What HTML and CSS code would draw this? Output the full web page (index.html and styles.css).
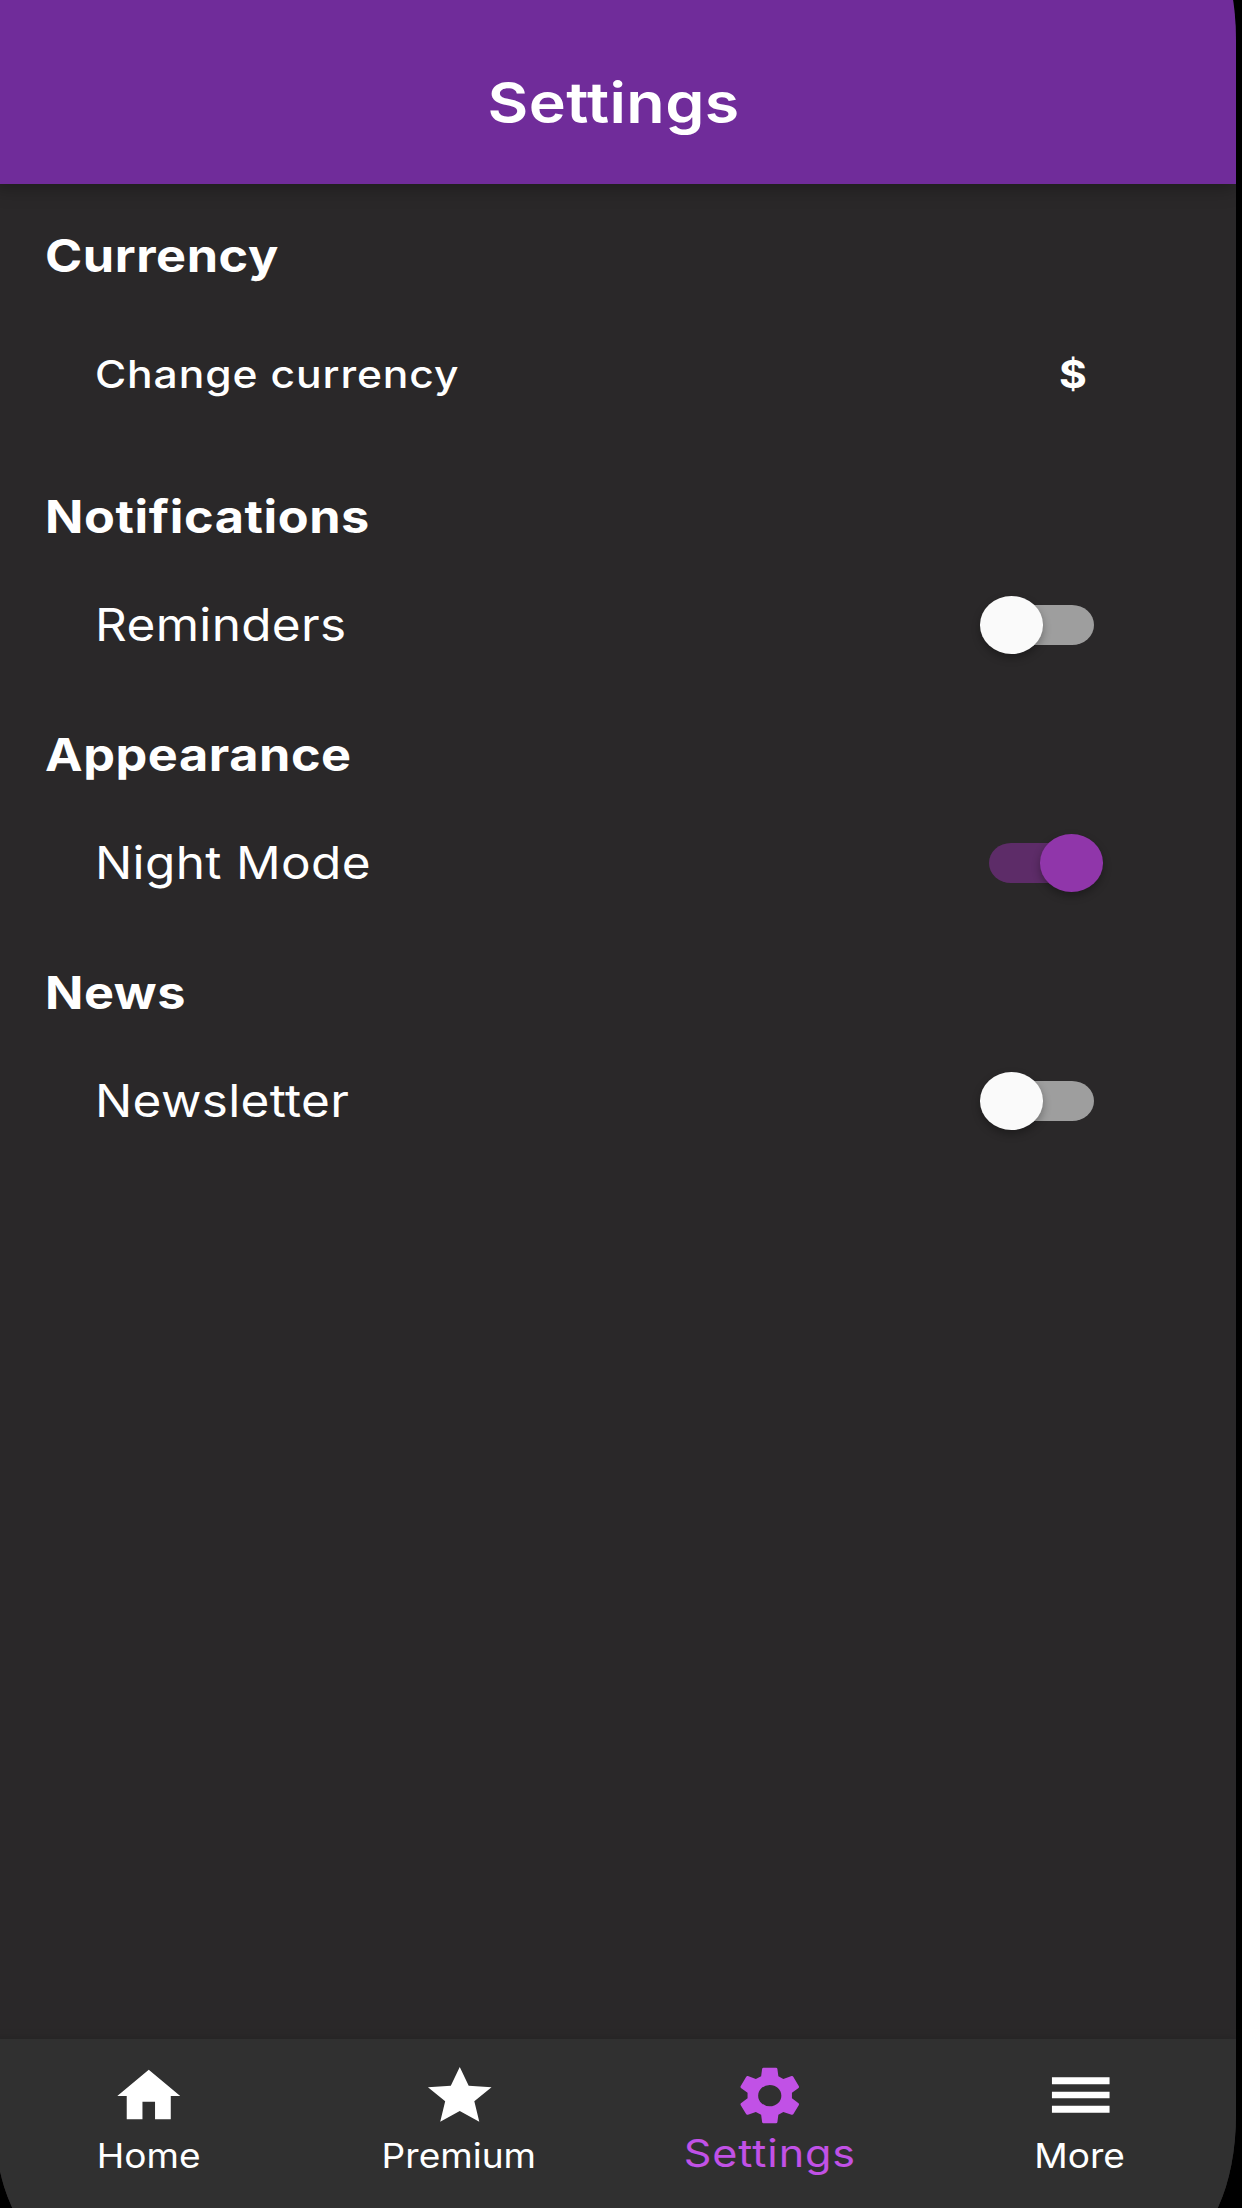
FILE: index.html
```html
<!DOCTYPE html>
<html lang="en">
<head>
    <meta charset="UTF-8">
    <meta name="viewport" content="width=device-width, initial-scale=1.0">
    <title>Settings</title>
    <link rel="stylesheet" href="styles.css">
</head>
<body>
    <div class="screen">
        <header class="header">
            <h1 class="text">Settings</h1>
        </header>
        <main class="content">
            <section class="section section-currency">
                <h2 class="text">Currency</h2>
                <div class="row">
                    <span class="text label-small">Change currency</span>
                    <span class="text currency">$</span>
                </div>
            </section>
            <section class="section">
                <h2 class="text">Notifications</h2>
                <div class="row">
                    <span class="text label">Reminders</span>
                    <div class="switch"><div class="thumb"></div></div>
                </div>
            </section>
            <section class="section">
                <h2 class="text">Appearance</h2>
                <div class="row">
                    <span class="text label">Night Mode</span>
                    <div class="switch on"><div class="thumb"></div></div>
                </div>
            </section>
            <section class="section">
                <h2 class="text">News</h2>
                <div class="row">
                    <span class="text label">Newsletter</span>
                    <div class="switch"><div class="thumb"></div></div>
                </div>
            </section>
        </main>
        <nav class="nav">
            <a class="nav-item">
                <svg class="icon" viewBox="0 0 24 24" preserveAspectRatio="none"><path d="M10 20v-6h4v6h5v-8h3L12 3 2 12h3v8z"/></svg>
                <span class="text">Home</span>
            </a>
            <a class="nav-item">
                <svg class="icon" viewBox="0 0 228 210" preserveAspectRatio="none"><path d="M114 18L141 74L210 79L158 121L173 182L114 150L55 182L70 121L18 79L87 74z"/></svg>
                <span class="text">Premium</span>
            </a>
            <a class="nav-item active">
                <svg class="icon" viewBox="0 0 228 210" preserveAspectRatio="none"><path fill-rule="evenodd" d="M95 20H133Q136 20 137 23L140 46L155 54L180 45Q183 44 185 47L202 76Q203 79 201 81L181 95V112L201 127Q203 129 202 132L185 160Q183 162 180 161L155 153L140 161L137 184Q136 187 133 187H95Q92 187 91 184L88 161L72 153L48 161Q45 162 43 160L26 132Q25 129 27 127L47 112V95L27 81Q25 79 26 76L43 47Q45 44 48 45L72 54L88 46L91 23Q92 20 95 20zM114 72A35 32 0 1 0 114 136A35 32 0 1 0 114 72z"/></svg>
                <span class="text">Settings</span>
            </a>
            <a class="nav-item">
                <svg class="icon" viewBox="0 0 228 210" preserveAspectRatio="none"><path d="M27 49h174v21H27zM27 92h174v20H27zM27 134h174v21H27z"/></svg>
                <span class="text">More</span>
            </a>
        </nav>
    </div>
</body>
</html>
```
FILE: styles.css
```css
* {
    box-sizing: border-box;
}
body {
    margin: 0;
    height: 2208px;
    background-color: #000;
    color: #fff;
    font-family: Inter, 'Liberation Sans', sans-serif;
    overflow: hidden;
}
/* the rounded device screen runs past the window on three sides */
.screen {
    display: flex;
    flex-direction: column;
    width: 1241.5px;
    height: 2335px;
    margin: -90px 0 0 -6px;
    border-radius: 61px / 130px;
    background-color: #2a2829;
    overflow: hidden;
}
.text {
    display: inline-block;
    margin: 0;
    white-space: nowrap;
    transform: scaleX(1.12);
    transform-origin: left center;
}
.header {
    display: flex;
    justify-content: center;
    height: 273.5px;
    padding-top: 160px;
    background-color: #702c9a;
    box-shadow: 0 4px 18px rgba(0, 0, 0, 0.3);
}
.header h1 {
    margin-right: 2px;
    font-size: 56px;
    line-height: 66px;
    font-weight: 600;
    letter-spacing: 0.4px;
    transform-origin: center;
}
.content {
    flex: 1;
    padding: 45px 0 0 51px;
}
.section {
    margin-bottom: 63px;
}
.section-currency {
    margin-bottom: 75px;
}
.section h2 {
    display: block;
    font-size: 45px;
    line-height: 54px;
    font-weight: 700;
    letter-spacing: 0.5px;
    font-variant-ligatures: none;
}
.row {
    display: flex;
    align-items: center;
    justify-content: space-between;
    height: 80px;
    margin-top: 41px;
    padding: 0 142px 0 50px;
}
.section-currency .row {
    margin-top: 51px;
    margin-bottom: 76px;
    padding-right: 152px;
}
.label {
    font-size: 45px;
    letter-spacing: 0.3px;
    transform: scaleX(1.1);
}
.label-small {
    font-size: 38px;
    font-weight: 500;
    letter-spacing: 0.8px;
}
.currency {
    font-size: 38px;
    font-weight: 700;
}
.switch {
    display: flex;
    align-items: center;
    width: 104.5px;
    height: 40px;
    border-radius: 22px / 20px;
    background-color: #9e9e9e;
}
.thumb {
    flex: none;
    width: 63.5px;
    height: 58px;
    margin-left: -9.5px;
    border-radius: 50%;
    background-color: #fafafa;
    box-shadow: 0 4px 8px rgba(0, 0, 0, 0.3);
}
.switch.on {
    justify-content: flex-end;
    background-color: #5d2c68;
}
.switch.on .thumb {
    margin: 0 -9.5px 0 0;
    background-color: #9036aa;
}
.nav {
    display: flex;
    height: 206px;
    background-color: #303030;
    box-shadow: 0 -2px 8px rgba(0, 0, 0, 0.12);
}
.nav-item {
    flex: 1;
    display: flex;
    flex-direction: column;
    align-items: center;
    padding-top: 22px;
    font-size: 34px;
    line-height: 44px;
}
.nav-item .text {
    margin: 3px 1px 0 0;
    transform: scaleX(1.09);
    transform-origin: center;
}
.icon {
    width: 75.5px;
    height: 70px;
    fill: currentColor;
}
.nav-item.active {
    color: #c151e6;
    font-size: 38.5px;
    letter-spacing: 0.8px;
}
.nav-item.active .text {
    margin: 0;
    transform: scaleX(1.12);
}
```
